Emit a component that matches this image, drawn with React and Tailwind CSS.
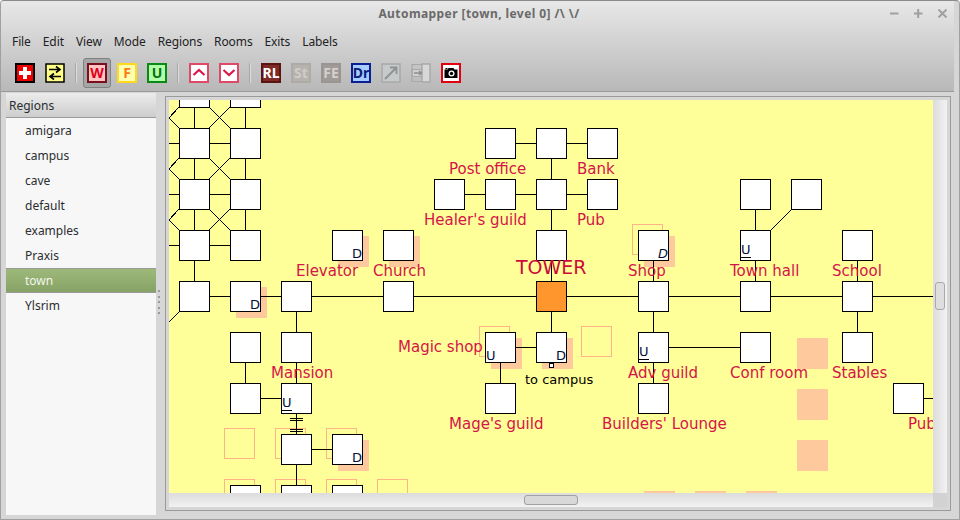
import React from "react";

const OX = 169, OY = 100;
const rooms = [
  [179,77],[230,77],
  [179,128],[230,128],[485,128],[536,128],[587,128],
  [179,179],[230,179],[434,179],[485,179],[536,179],[587,179],[740,179],[791,179],
  [179,230],[230,230],[332,230,"D"],[383,230],[536,230],[638,230,"Di"],[740,230,"Uu"],[842,230],
  [179,281],[230,281,"D"],[281,281],[383,281],[536,281,"O"],[638,281],[740,281],[842,281],
  [230,332],[281,332],[485,332,"U"],[536,332,"D"],[638,332,"Uu"],[740,332],[842,332],
  [230,383],[281,383,"Uu"],[485,383],[638,383],[893,383],
  [281,434],[332,434,"D"],
  [230,485],[281,485],[332,485],
];
const shadows = [[338,236],[389,236],[236,287],[338,440],[491,338],[542,338],[644,236],[797,338],[797,389],[797,440],[644,491],[695,491],[746,491]];
const ghosts = [[224,428],[275,428],[326,428],[224,479],[275,479],[326,479],[377,479],[479,326],[581,326],[632,224]];
const labels = [
  ["Post office",449,159],["Bank",577,159],["Healer's guild",424,210],["Pub",577,210],
  ["Elevator",296,261],["Church",373,261],["Shop",628,261],["Town hall",730,261],["School",832,261],
  ["Magic shop",398,337],["Mansion",271,363],["Adv guild",628,363],["Conf room",730,363],["Stables",832,363],
  ["Mage's guild",449,414],["Builders' Lounge",602,414],["Pub",908,414],
];
const lines = [
  [194,107,194,128],[194,159,194,179],[194,210,194,230],[194,261,194,281],
  [245,107,245,128],[245,159,245,179],[245,210,245,230],
  [169,143,179,143],[210,143,230,143],[169,194,179,194],[210,194,230,194],[169,245,179,245],[210,245,230,245],
  [210,296,230,296],
  [261,296,281,296],[312,296,383,296],[414,296,536,296],[567,296,638,296],[669,296,740,296],[771,296,842,296],[873,296,933,296],
  [296,312,296,332],[296,363,296,383],[296,414,296,434],[296,465,296,485],[245,363,245,383],[261,398,281,398],[312,449,332,449],
  [290,418,303,418],[290,420,303,420],[290,429,303,429],[290,431,303,431],
  [516,143,536,143],[567,143,587,143],[465,194,485,194],[516,194,536,194],[567,194,587,194],
  [551,159,551,179],[551,210,551,230],[551,261,551,281],[551,312,551,332],
  [516,347,536,347],[500,363,500,383],
  [653,261,653,281],[653,312,653,332],[653,363,653,383],[669,347,740,347],
  [755,210,755,230],[755,261,755,281],[857,261,857,281],[857,312,857,332],
  [924,398,933,398],
];
const diagonals = [
  [209,107,230,128],[230,107,209,128],[179,107,169,118],[169,118,179,128],
  [209,158,230,179],[230,158,209,179],[179,158,169,169],[169,169,179,179],
  [209,209,230,230],[230,209,209,230],[179,209,169,220],[169,220,179,230],
  [179,312,169,322],[771,230,791,210],
];
const regions = ["amigara","campus","cave","default","examples","Praxis","town","Ylsrim"];
const menu = ["File","Edit","View","Mode","Regions","Rooms","Exits","Labels"];

function TextIcon({ cls, children }) {
  return (
    <div className={"w-5 h-5 flex items-center justify-center font-bold leading-none whitespace-nowrap " + cls}>{children}</div>
  );
}
function Sep() {
  return <div className="w-[1px] h-5 bg-[#a8a8a8] border-r border-[#dcdcdc] box-content" />;
}
function Svg({ children }) {
  return <svg width="20" height="20" viewBox="0 0 20 20" className="block">{children}</svg>;
}

function Toolbar() {
  return (
    <div className="flex items-center h-[30px] pl-[15px] mt-[2px]">
      <Svg><rect x="1" y="1" width="18" height="18" fill="#ee0000" stroke="#000" strokeWidth="2"/><path d="M8 4h4v4h4v4h-4v4H8v-4H4V8h4z" fill="#fff"/></Svg>
      <div className="ml-[10px]"><Svg>
        <rect x="1" y="1" width="18" height="18" fill="#ffff88" stroke="#000" strokeWidth="1.5"/>
        <path d="M4 6.5h10M11 3.5l4 3-4 3M16 13.5H6M9 10.5l-4 3 4 3" fill="none" stroke="#000" strokeWidth="1.6"/>
      </Svg></div>
      <div className="ml-[10px] mr-[6px]"><Sep /></div>
      <div className="w-[28px] h-[30px] rounded-[3px] border border-[#808080] bg-[#a6a6a6] flex items-center justify-center">
        <TextIcon cls="text-[14px] border-2 border-[#7a0f1e] bg-[#ffc4c4] text-[#e0001a]">W</TextIcon>
      </div>
      <TextIcon cls="text-[14px] ml-[6px] border-2 border-[#ffd820] bg-[#ffffb0] text-[#ff7a10]">F</TextIcon>
      <TextIcon cls="text-[14px] ml-[10px] border-2 border-[#0a8a14] bg-[#b0ffa8] text-[#067010]">U</TextIcon>
      <div className="ml-[10px] mr-[10px]"><Sep /></div>
      <Svg><rect x="1" y="1" width="18" height="18" fill="#fff" stroke="#e04868" strokeWidth="2"/><path d="M4.5 12l5.5-5 5.5 5" fill="none" stroke="#d81848" strokeWidth="2.2"/></Svg>
      <div className="ml-[10px]"><Svg><rect x="1" y="1" width="18" height="18" fill="#fff" stroke="#e04868" strokeWidth="2"/><path d="M4.5 7l5.5 5 5.5-5" fill="none" stroke="#d81848" strokeWidth="2.2"/></Svg></div>
      <div className="ml-[10px] mr-[10px]"><Sep /></div>
      <TextIcon cls="text-[14px] border-2 border-[#5c1410] bg-[#7e2a26] text-white">RL</TextIcon>
      <TextIcon cls="text-[14px] ml-[10px] border-2 border-[#aeaaa6] bg-[#b6b2ae] text-[#d0ccc8]">St</TextIcon>
      <TextIcon cls="text-[14px] ml-[10px] border-2 border-[#9a9492] bg-[#a09a98] text-[#d4d0ce]">FE</TextIcon>
      <TextIcon cls="text-[14px] ml-[10px] border-2 border-[#0a1e96] bg-[#a8ccff] text-[#0a1e78]">Dr</TextIcon>
      <div className="ml-[10px]"><Svg>
        <rect x="1" y="1" width="18" height="18" fill="#c6caca" stroke="#a8a8a8" strokeWidth="1.5"/>
        <path d="M4 16L15 5M9 4.5h6.5V11" fill="none" stroke="#8e9292" strokeWidth="1.8"/>
      </Svg></div>
      <div className="ml-[10px]"><Svg>
        <path d="M1 6.5h10v7H1z" fill="#cfcfcf" stroke="#a8a8a8" strokeWidth="1.2"/>
        <path d="M11 1h8v18h-8z" fill="#d8d8d8" stroke="#a8a8a8" strokeWidth="1.4"/>
        <path d="M1 1.5h10M1 18.5h10M1 1v18" fill="none" stroke="#a8a8a8" strokeWidth="1.2"/>
        <path d="M3 10h7M8 8l2.5 2-2.5 2" fill="none" stroke="#8e8e8e" strokeWidth="1.4"/>
      </Svg></div>
      <div className="ml-[10px]"><Svg>
        <rect x="1" y="1" width="18" height="18" fill="#fff" stroke="#e00010" strokeWidth="2"/>
        <path d="M3.5 6.5h3l1-1.5h5l1 1.5h3v8.5h-13z" fill="#000"/>
        <circle cx="10.5" cy="10.5" r="3" fill="#fff"/><circle cx="10.5" cy="10.5" r="1.7" fill="#000"/>
        <rect x="4.5" y="5" width="2" height="1.2" fill="#000"/>
      </Svg></div>
    </div>
  );
}

function Room({ x, y, kind }) {
  const orange = kind === "O";
  return (
    <div
      className={"absolute w-[31px] h-[31px] border border-black " + (orange ? "bg-[#ff962d]" : "bg-white")}
      style={{ left: x - OX, top: y - OY }}
    >
      {kind === "D" && <span className="absolute right-0 top-[16px] text-[13px] leading-[14px] text-[#00123a]">D</span>}
      {kind === "Di" && <span className="absolute right-0 top-[16px] text-[13px] leading-[14px] italic text-[#00123a]">D</span>}
      {kind === "U" && <span className="absolute left-0 top-[16px] text-[13px] leading-[14px] text-[#00123a]">U</span>}
      {kind === "Uu" && <span className="absolute left-0 top-[12px] text-[13px] leading-[14px] text-[#00123a] border-b border-black w-[10px]">U</span>}
    </div>
  );
}

function MapCanvas() {
  return (
    <div className="relative w-[764px] h-[393px] bg-[#ffff99] overflow-hidden font-['DejaVu_Sans',sans-serif]">
      {shadows.map(([x, y], i) => (
        <div key={i} className="absolute w-[31px] h-[31px] bg-[#ffc99e]" style={{ left: x - OX, top: y - OY }} />
      ))}
      {ghosts.map(([x, y], i) => (
        <div key={i} className="absolute w-[31px] h-[31px] border border-[#ffb388]" style={{ left: x - OX, top: y - OY }} />
      ))}
      <svg width="764" height="393" className="absolute left-0 top-0">
        <g shapeRendering="crispEdges" stroke="#000" strokeWidth="1" fill="none">
          {lines.map(([a, b, c, d], i) => (
            <line key={i} x1={a - OX + (a === c ? 0.5 : 0)} y1={b - OY + (b === d ? 0.5 : 0)} x2={c - OX + (a === c ? 0.5 : 0)} y2={d - OY + (b === d ? 0.5 : 0)} />
          ))}
          {diagonals.map(([a, b, c, d], i) => (
            <line key={i} x1={a - OX} y1={b - OY} x2={c - OX} y2={d - OY} />
          ))}
        </g>
      </svg>
      {rooms.map(([x, y, k], i) => <Room key={i} x={x} y={y} kind={k} />)}
      <div className="absolute w-[5px] h-[5px] bg-white border border-black" style={{ left: 549 - OX, top: 363 - OY }} />
      {labels.map(([t, x, y], i) => (
        <div key={i} className="absolute whitespace-nowrap text-[15px] leading-[20px] text-[#d4144a]" style={{ left: x - OX, top: y - OY }}>{t}</div>
      ))}
      <div className="absolute whitespace-nowrap text-[19px] leading-[24px] text-[#cc0a3c]" style={{ left: 516 - OX, top: 255 - OY }}>TOWER</div>
      <div className="absolute whitespace-nowrap text-[13px] leading-[16px] text-black" style={{ left: 525 - OX, top: 372 - OY }}>to campus</div>
    </div>
  );
}

export default function App() {
  return (
    <div className="w-[960px] h-[520px] flex flex-col bg-[#d6d6d6] overflow-hidden rounded-t-[4px] border border-t-[#8a8a8a] border-x-[#a0a0a0] border-b-[#a0a0a0] font-['Noto_Sans',sans-serif]">
      <div className="h-[91px] shrink-0 mr-[5px] bg-gradient-to-b from-[#e8e8e8] to-[#b8b8b8] border-b border-[#9a9a9a] flex flex-col relative">
        <div className="h-[26px] shrink-0 flex items-center justify-center pl-[3px] text-[12px] font-bold text-[#6a6a6a] tracking-[0.42px]">
          Automapper [town, level 0] /\ \/
          <div className="absolute right-[7px] top-[8px] flex items-center gap-[15px]">
            <svg width="9" height="9" viewBox="0 0 9 9"><path d="M0 4.5h8.5" stroke="#a0a0a0" strokeWidth="2"/></svg>
            <svg width="9" height="9" viewBox="0 0 9 9"><path d="M0 4.5h8.5M4.2 0v9" stroke="#a0a0a0" strokeWidth="2"/></svg>
            <svg width="9" height="9" viewBox="0 0 9 9"><path d="M0.5 0.5l8 8M8.5 0.5l-8 8" stroke="#a0a0a0" strokeWidth="2"/></svg>
          </div>
        </div>
        <div className="h-[29px] shrink-0 flex items-center pl-[11px] gap-[12px] text-[12px] tracking-[-0.1px] text-[#1e2224]">
          {menu.map((m) => <span key={m}>{m}</span>)}
        </div>
        <div className="-ml-[1px]"><Toolbar /></div>
      </div>
      <div className="flex-1 flex min-h-0 pl-[5px] pt-[1px]">
        <div className="w-[150px] h-[422px] shrink-0 bg-[#f7f7f7] text-[12px] text-[#2a2e30]">
          <div className="h-[25px] pt-[1px] bg-gradient-to-b from-[#ececec] to-[#cdcdcd] border-b border-[#9a9a9a] flex items-center pl-[3px]">Regions</div>
          {regions.map((r) => (
            <div
              key={r}
              className={"h-[25px] flex items-center pl-[19px] " + (r === "town" ? "bg-gradient-to-b from-[#9db97a] to-[#87a266] border-y border-[#999] text-[#f2f5ea]" : "")}
            >
              {r}
            </div>
          ))}
        </div>
        <div className="w-[9px] shrink-0 flex flex-col items-start pl-[2px] gap-[3.5px] pt-[197px]">
          {[0, 1, 2, 3, 4].map((i) => <div key={i} className="w-[2px] h-[2px] bg-[#9a9a9a]" />)}
        </div>
        <div className="mt-[3px] w-[786px] h-[415px] shrink-0 border border-[#9a9a9a] p-[3px] grid grid-cols-[764px_14px] grid-rows-[393px_14px]">
          <MapCanvas />
          <div className="bg-gradient-to-r from-[#dcdcdc] to-[#f2f2f2] relative">
            <div className="absolute left-[2px] top-[182px] w-[10px] h-[28px] rounded-[3px] border border-[#a8a8a8] bg-[#dedede]" />
          </div>
          <div className="bg-gradient-to-b from-[#dcdcdc] to-[#f2f2f2] relative">
            <div className="absolute left-[355px] top-[2px] w-[54px] h-[10px] rounded-[3px] border border-[#a0a0a0] bg-[#d8d8d8]" />
          </div>
          <div className="bg-[#d2d2d2]" />
        </div>
      </div>
    </div>
  );
}
